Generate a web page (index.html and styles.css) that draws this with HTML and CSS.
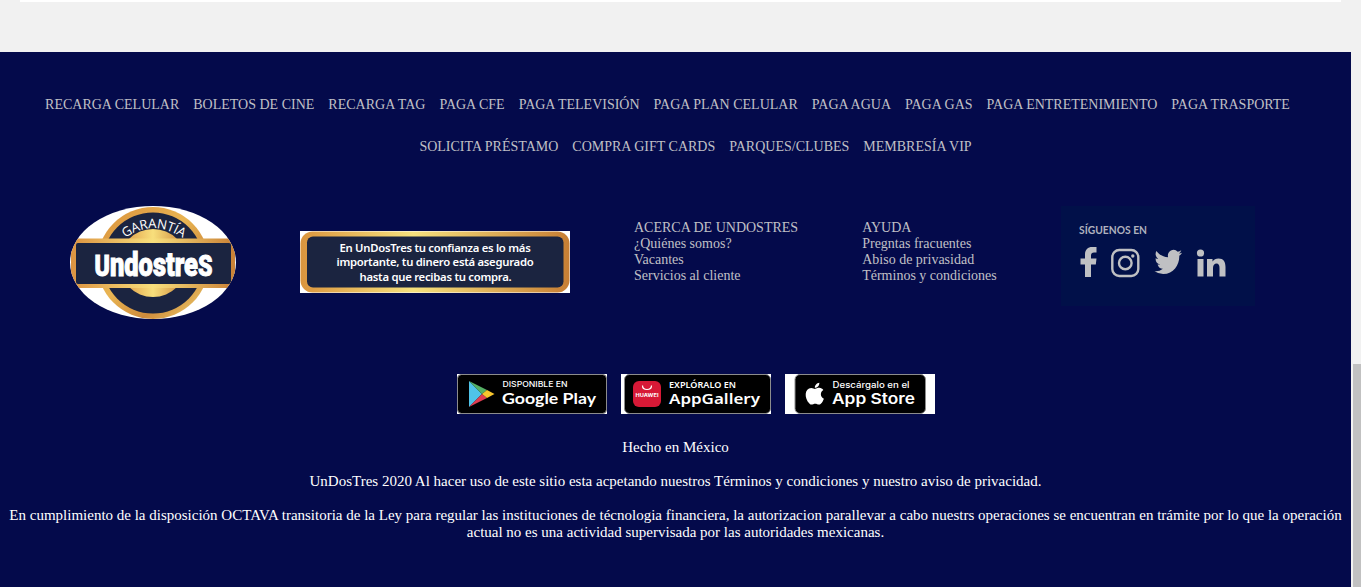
FILE: index.html
```html
<!DOCTYPE html>
<html lang="es">
<head>
<meta charset="utf-8">
<title>UnDosTres</title>
<link rel="stylesheet" href="styles.css">
</head>
<body>
<div class="page">
<main class="view">
  <div class="content-end"></div>
  <footer class="footer">
    <nav class="services">
      <div class="services-row first">
        <a>RECARGA CELULAR</a><a>BOLETOS DE CINE</a><a>RECARGA TAG</a><a>PAGA CFE</a><a>PAGA TELEVISIÓN</a><a>PAGA PLAN CELULAR</a><a>PAGA AGUA</a><a>PAGA GAS</a><a>PAGA ENTRETENIMIENTO</a><a>PAGA TRASPORTE</a>
      </div>
      <div class="services-row second">
        <a>SOLICITA PRÉSTAMO</a><a>COMPRA GIFT CARDS</a><a>PARQUES/CLUBES</a><a>MEMBRESÍA VIP</a>
      </div>
    </nav>
    <section class="info">
      <svg class="seal" width="166" height="113" viewBox="0 0 166 113">
        <defs>
          <linearGradient id="ring" x1="0" y1="0" x2="1" y2="1"><stop offset="0" stop-color="#d9903a"/><stop offset=".45" stop-color="#e9b553"/><stop offset=".7" stop-color="#cf8b3b"/><stop offset="1" stop-color="#f3d673"/></linearGradient>
          <linearGradient id="band" x1="0" x2="1"><stop offset="0" stop-color="#dc9340"/><stop offset=".5" stop-color="#f8df7c"/><stop offset="1" stop-color="#c98035"/></linearGradient>
          <clipPath id="oval"><ellipse cx="83" cy="56.5" rx="83" ry="56.5"/></clipPath>
          <path id="arc" d="M55 32Q84 12 114 33"/>
        </defs>
        <g clip-path="url(#oval)">
          <rect width="166" height="113" fill="#fff"/>
          <circle cx="83" cy="57" r="56" fill="url(#ring)"/>
          <circle cx="83" cy="57" r="50.5" fill="#1b2440"/>
          <circle cx="83" cy="57" r="34" fill="url(#band)"/>
          <rect x="1" y="32.5" width="164" height="49.500" rx="3" fill="url(#band)"/>
          <rect x="6" y="37" width="155" height="41" rx="2" fill="#1b2440"/>
        </g>
        <text class="seal-arc" font-size="13"><textPath href="#arc" textLength="62" lengthAdjust="spacing">GARANTÍA</textPath></text>
        <text class="seal-name" x="24.500" y="69.500" textLength="118" lengthAdjust="spacingAndGlyphs"><tspan font-size="30">U</tspan><tspan font-size="33">ndostre</tspan><tspan font-size="30">S</tspan></text>
      </svg>
      <svg class="promise" width="270" height="62" viewBox="0 0 270 62">
        <defs><linearGradient id="frame" x1="0" x2="1"><stop offset="0" stop-color="#db953e"/><stop offset=".42" stop-color="#f6e17d"/><stop offset="1" stop-color="#c77e34"/></linearGradient></defs>
        <rect width="270" height="62" fill="#fff"/>
        <rect x=".5" y=".5" width="269" height="61" rx="12" fill="url(#frame)"/>
        <rect x="7" y="5.500" width="256.500" height="51" rx="6" fill="#1b2440"/>
        <g class="promise-text">
          <text x="39.500" y="21" textLength="191">En UnDosTres tu confianza es lo más</text>
          <text x="36.500" y="35" textLength="197">importante, tu dinero está asegurado</text>
          <text x="59.500" y="50" textLength="152">hasta que recibas tu compra.</text>
        </g>
      </svg>
      <div class="links about"><a>ACERCA DE UNDOSTRES</a><a>¿Quiénes somos?</a><a>Vacantes</a><a>Servicios al cliente</a></div>
      <div class="links help"><a>AYUDA</a><a>Pregntas fracuentes</a><a>Abiso de privasidad</a><a>Términos y condiciones</a></div>
      <svg class="social" width="194" height="100" viewBox="0 0 194 100">
        <rect width="194" height="100" fill="#011049"/>
        <text class="social-title" x="18" y="28" textLength="68" lengthAdjust="spacingAndGlyphs">SÍGUENOS EN</text>
        <g fill="#bfc0c3">
          <path d="M24 71V58.500h-4.500v-6H24v-4c0-5 3-7.500 7-7.500h4.500v5.500H33q-3 0-3 3v3h5.500l-.7 6H30V71z"/>
          <rect x="51.300" y="44" width="26" height="26" rx="7" fill="none" stroke="#bfc0c3" stroke-width="2.400"/>
          <circle cx="64.300" cy="57" r="6.300" fill="none" stroke="#bfc0c3" stroke-width="2.400"/>
          <circle cx="71.800" cy="50" r="1.700"/>
          <path transform="translate(93.500 41) scale(1.150 1.240)" d="M23.950 4.570a10 10 0 0 1-2.820.77 4.960 4.960 0 0 0 2.160-2.720c-.95.550-2 .95-3.120 1.180a4.920 4.920 0 0 0-8.380 4.480C7.690 8.100 4.070 6.130 1.640 3.160a4.900 4.900 0 0 0 1.520 6.570 4.900 4.900 0 0 1-2.230-.61v.06a4.920 4.920 0 0 0 3.950 4.830 5 5 0 0 1-2.210.08 4.940 4.940 0 0 0 4.600 3.420A9.870 9.870 0 0 1 0 19.540a14 14 0 0 0 7.550 2.210c9.050 0 14-7.500 14-13.980 0-.21 0-.42-.02-.63a9.940 9.940 0 0 0 2.420-2.570z"/>
          <circle cx="139.500" cy="47" r="3.600"/>
          <path d="M136.500 53h6v17.500h-6zM146 53h5.500v2.500q2-3 6-3c5 0 7 3.300 7 8.500v9.500h-6V62c0-3-1-4.500-3-4.500s-3.500 1.500-3.500 4.500v8.500h-6z"/>
        </g>
      </svg>
    </section>
    <section class="stores">
      <svg width="150" height="40" viewBox="0 0 150 40">
        <rect width="150" height="40" fill="#fff"/><rect x=".5" y=".5" width="149" height="39" rx="4" fill="#000" stroke="#8c8c8c"/>
        <path d="M12 7v26l13-13z" fill="#4fc3e8"/><path d="M12 7l18 9-5 4z" fill="#55b064"/><path d="M12 33l18-9-5-4z" fill="#e13c51"/><path d="M30 16l7.500 4-7.500 4-5-4z" fill="#f7c52e"/>
        <text class="store-small" x="45.500" y="13" font-size="8" textLength="65" lengthAdjust="spacingAndGlyphs">DISPONIBLE EN</text>
        <text class="store-name google" x="45" y="29.500" textLength="94" lengthAdjust="spacingAndGlyphs">Google Play</text>
      </svg>
      <svg width="150" height="40" viewBox="0 0 150 40">
        <rect width="150" height="40" fill="#fff"/><rect x="3.500" y=".5" width="146" height="39" rx="5" fill="#000" stroke="#8c8c8c"/>
        <rect x="12" y="7" width="28" height="26" rx="6" fill="#d71936"/><path d="M21.500 11.500q0 4 4.500 4t4.500-4" fill="none" stroke="#fff" stroke-width="1.200"/>
        <text class="huawei" x="14.500" y="23" textLength="23" lengthAdjust="spacingAndGlyphs">HUAWEI</text>
        <text class="store-small gallery" x="48" y="13.500" font-size="8" textLength="67" lengthAdjust="spacingAndGlyphs">EXPLÓRALO EN</text>
        <text class="store-name gallery" x="48" y="29.500" textLength="91" lengthAdjust="spacingAndGlyphs">AppGallery</text>
      </svg>
      <svg width="150" height="40" viewBox="0 0 150 40">
        <rect width="150" height="40" fill="#fff"/><rect x="10" y=".5" width="130.500" height="39" rx="5" fill="#000" stroke="#8c8c8c"/>
        <path fill="#fff" transform="translate(15.400 5) scale(1.200 1.220)" d="M17.050 20.280c-.98.950-2.050.800-3.080.350-1.090-.46-2.090-.48-3.240 0-1.440.62-2.200.44-3.060-.35C2.790 15.250 3.510 7.590 9.050 7.310c1.350.070 2.290.74 3.080.8 1.180-.24 2.310-.93 3.570-.84 1.510.12 2.650.72 3.400 1.800-3.120 1.870-2.380 5.980.480 7.130-.57 1.500-1.310 2.990-2.540 4.090zM12.030 7.250C11.880 5.020 13.690 3.180 15.770 3c.29 2.580-2.340 4.500-3.740 4.250z" />
        <text class="store-small" x="47.500" y="14" font-size="8.500" textLength="77" lengthAdjust="spacingAndGlyphs">Descárgalo en el</text>
        <text class="store-name" x="47" y="30" textLength="83" lengthAdjust="spacingAndGlyphs">App Store</text>
      </svg>
    </section>
    <p>Hecho en México</p>
    <p>UnDosTres 2020 Al hacer uso de este sitio esta acpetando nuestros Términos y condiciones y nuestro aviso de privacidad.</p>
    <p>En cumplimiento de la disposición OCTAVA transitoria de la Ley para regular las instituciones de técnologia financiera, la autorizacion parallevar a cabo nuestrs operaciones se encuentran en trámite por lo que la operación actual no es una actividad supervisada por las autoridades mexicanas.</p>
  </footer>
</main>
<div class="scrollbar"><div class="thumb"></div></div>
</div>
</body>
</html>
```
FILE: styles.css
```css
* { box-sizing: border-box; }
body { margin: 0; background: #f1f1f1; font-family: "Liberation Serif", serif; overflow: hidden; }
.page { display: flex; height: 587px; }
.view { width: 1351px; flex: none; }
.content-end { height: 2px; margin: 0 10px 50px 20px; background: #fff; }
.footer { height: 535px; padding-top: 45px; background: #040a4b; color: #fff; font-size: 15px; line-height: 17px; text-align: center; }
.services-row { display: flex; justify-content: center; gap: 14px; height: 42px; font-size: 14px; line-height: 16px; color: #c0c0c6; white-space: nowrap; }
.services-row.first { padding-right: 16px; }
.services-row.second { padding-left: 40px; }
.info { display: flex; align-items: flex-start; height: 168px; margin-top: 25px; padding-left: 70px; }
.info > * { flex: none; }
.promise { margin: 25px 0 0 64px; }
.links { display: flex; flex-direction: column; margin-top: 14px; text-align: left; font-size: 14px; line-height: 16px; color: #c0c0c6; white-space: nowrap; }
.about { width: 164px; margin-left: 64px; }
.help { width: 135px; margin-left: 64.2px; }
.social { margin-left: 63.8px; }
.seal-arc { fill: #fff; font-family: "Open Sans", sans-serif; font-weight: 500; }
.seal-name { fill: #fff; stroke: #fff; stroke-width: 1; font-family: "Roboto", sans-serif; font-weight: 900; }
.promise-text { fill: #fff; font-family: "Noto Sans", sans-serif; font-weight: 600; font-size: 11.3px; }
.promise-text text { letter-spacing: -.2px; }
.social-title { fill: #afb2be; font-family: Lato, sans-serif; font-weight: 700; font-size: 11px; }
.stores { display: flex; justify-content: center; gap: 14px; height: 65px; padding-left: 41px; }
.store-small { fill: #fff; font-family: Inter, sans-serif; font-weight: 500; }
.store-name { fill: #fff; font-family: Inter, sans-serif; font-weight: 600; font-size: 15px; }
.google { font-family: Lato, sans-serif; font-weight: 700; font-size: 16px; }
.gallery { font-family: "Noto Sans", sans-serif; font-weight: 600; }
.huawei { fill: #fff; font-family: Inter, sans-serif; font-weight: 700; font-size: 5px; }
p { margin: 0 0 17px; padding: 0 8px; }
.scrollbar { width: 10px; padding: 364px 0 0 2px; background: #f1f1f1; }
.thumb { height: 223px; background: #c1c1c1; }
```
